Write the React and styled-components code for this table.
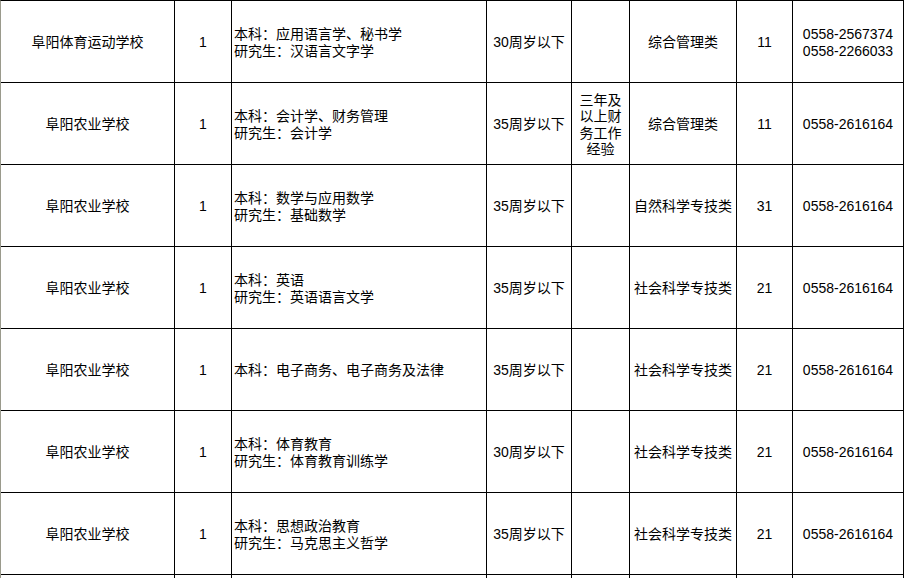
import React from "react";
import styled, { createGlobalStyle } from "styled-components";

const rows = [
  {
    school: "阜阳体育运动学校",
    count: "1",
    major: ["本科：应用语言学、秘书学", "研究生：汉语言文字学"],
    age: "30周岁以下",
    other: "",
    kind: "综合管理类",
    code: "11",
    phone: ["0558-2567374", "0558-2266033"],
  },
  {
    school: "阜阳农业学校",
    count: "1",
    major: ["本科：会计学、财务管理", "研究生：会计学"],
    age: "35周岁以下",
    other: "三年及以上财务工作经验",
    kind: "综合管理类",
    code: "11",
    phone: ["0558-2616164"],
  },
  {
    school: "阜阳农业学校",
    count: "1",
    major: ["本科：数学与应用数学", "研究生：基础数学"],
    age: "35周岁以下",
    other: "",
    kind: "自然科学专技类",
    code: "31",
    phone: ["0558-2616164"],
  },
  {
    school: "阜阳农业学校",
    count: "1",
    major: ["本科：英语", "研究生：英语语言文学"],
    age: "35周岁以下",
    other: "",
    kind: "社会科学专技类",
    code: "21",
    phone: ["0558-2616164"],
  },
  {
    school: "阜阳农业学校",
    count: "1",
    major: ["本科：电子商务、电子商务及法律"],
    age: "35周岁以下",
    other: "",
    kind: "社会科学专技类",
    code: "21",
    phone: ["0558-2616164"],
  },
  {
    school: "阜阳农业学校",
    count: "1",
    major: ["本科：体育教育", "研究生：体育教育训练学"],
    age: "30周岁以下",
    other: "",
    kind: "社会科学专技类",
    code: "21",
    phone: ["0558-2616164"],
  },
  {
    school: "阜阳农业学校",
    count: "1",
    major: ["本科：思想政治教育", "研究生：马克思主义哲学"],
    age: "35周岁以下",
    other: "",
    kind: "社会科学专技类",
    code: "21",
    phone: ["0558-2616164"],
  },
];

function App() {
  return (
    <>
      <GlobalStyle />
      <Sheet>
        {rows.map((r, i) => (
          <Row key={i}>
            <Cell>{r.school}</Cell>
            <Cell>{r.count}</Cell>
            <Cell align="left">
              <Lines>
                {r.major.map((m) => (
                  <span key={m}>{m}</span>
                ))}
              </Lines>
            </Cell>
            <Cell>{r.age}</Cell>
            <Cell narrow>{r.other}</Cell>
            <Cell>{r.kind}</Cell>
            <Cell>{r.code}</Cell>
            <Cell>
              <Lines center>
                {r.phone.map((p) => (
                  <span key={p}>{p}</span>
                ))}
              </Lines>
            </Cell>
          </Row>
        ))}
        <Row>
          {Array.from({ length: 8 }).map((_, i) => (
            <Cell key={i} />
          ))}
        </Row>
      </Sheet>
    </>
  );
}

export default App;

const GlobalStyle = createGlobalStyle`
  html, body {
    margin: 0;
    padding: 0;
    background: #ffffff;
    overflow: hidden;
  }
  body {
    font-family: "Liberation Sans", "Noto Sans CJK SC", sans-serif;
    font-size: 14px;
    color: #000;
  }
`;

const Sheet = styled.div`
  width: 903px;
  border-left: 1px solid #9a9a8c;
  border-top: 1px solid #000;
`;

const Row = styled.div`
  display: grid;
  grid-template-columns: 174px 57px 255px 85px 58px 107px 56px 111px;
  height: 82px;
`;

const Cell = styled.div`
  box-sizing: border-box;
  border-right: 1px solid #000;
  border-bottom: 1px solid #000;
  display: flex;
  align-items: center;
  justify-content: ${(p) => (p.align === "left" ? "flex-start" : "center")};
  text-align: ${(p) => (p.align === "left" ? "left" : "center")};
  padding: ${(p) =>
    p.narrow ? "2px 6px 0" : p.align === "left" ? "2px 2px 0" : "2px 0 0"};
  line-height: ${(p) => (p.narrow ? "16.5px" : "17px")};
  white-space: ${(p) => (p.narrow ? "normal" : "nowrap")};
  overflow: hidden;
`;

const Lines = styled.div`
  display: flex;
  flex-direction: column;
  align-items: ${(p) => (p.center ? "center" : "flex-start")};
`;
